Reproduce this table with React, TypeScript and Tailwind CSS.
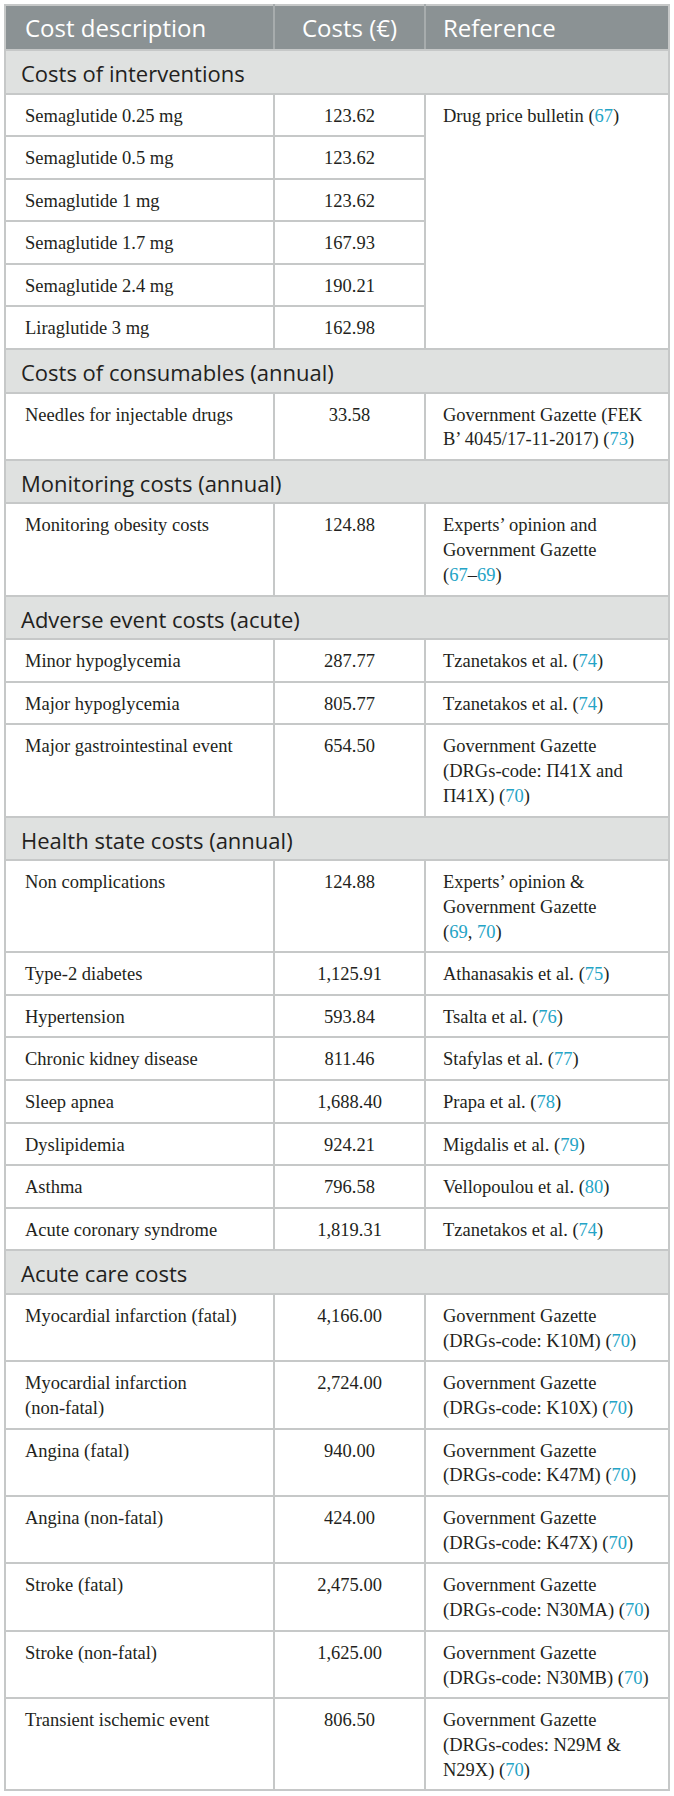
import React from "react";

type Row = { desc: string; cost: string; ref?: string; span?: number; skipRef?: boolean };
type Section = { title: string; rows: Row[] };

const GG = "Government Gazette";

const data: Section[] = [
  {
    title: "Costs of interventions",
    rows: [
      { desc: "Semaglutide 0.25 mg", cost: "123.62", ref: "Drug price bulletin [({67})]", span: 6 },
      { desc: "Semaglutide 0.5 mg", cost: "123.62", skipRef: true },
      { desc: "Semaglutide 1 mg", cost: "123.62", skipRef: true },
      { desc: "Semaglutide 1.7 mg", cost: "167.93", skipRef: true },
      { desc: "Semaglutide 2.4 mg", cost: "190.21", skipRef: true },
      { desc: "Liraglutide 3 mg", cost: "162.98", skipRef: true },
    ],
  },
  {
    title: "Costs of consumables (annual)",
    rows: [
      { desc: "Needles for injectable drugs", cost: "33.58", ref: GG + " (FEK B\u2019 4045/17-11-2017) [({73})]" },
    ],
  },
  {
    title: "Monitoring costs (annual)",
    rows: [
      { desc: "Monitoring obesity costs", cost: "124.88", ref: "Experts\u2019 opinion and " + GG + " [({67}\u2013{69})]" },
    ],
  },
  {
    title: "Adverse event costs (acute)",
    rows: [
      { desc: "Minor hypoglycemia", cost: "287.77", ref: "Tzanetakos et al. [({74})]" },
      { desc: "Major hypoglycemia", cost: "805.77", ref: "Tzanetakos et al. [({74})]" },
      { desc: "Major gastrointestinal event", cost: "654.50", ref: GG + " (DRGs-code: \u03A041X and \u03A041X) [({70})]" },
    ],
  },
  {
    title: "Health state costs (annual)",
    rows: [
      { desc: "Non complications", cost: "124.88", ref: "Experts\u2019 opinion & " + GG + " [({69}, {70})]" },
      { desc: "Type-2 diabetes", cost: "1,125.91", ref: "Athanasakis et al. [({75})]" },
      { desc: "Hypertension", cost: "593.84", ref: "Tsalta et al. [({76})]" },
      { desc: "Chronic kidney disease", cost: "811.46", ref: "Stafylas et al. [({77})]" },
      { desc: "Sleep apnea", cost: "1,688.40", ref: "Prapa et al. [({78})]" },
      { desc: "Dyslipidemia", cost: "924.21", ref: "Migdalis et al. [({79})]" },
      { desc: "Asthma", cost: "796.58", ref: "Vellopoulou et al. [({80})]" },
      { desc: "Acute coronary syndrome", cost: "1,819.31", ref: "Tzanetakos et al. [({74})]" },
    ],
  },
  {
    title: "Acute care costs",
    rows: [
      { desc: "Myocardial infarction [(fatal)]", cost: "4,166.00", ref: GG + " (DRGs-code: K10M) [({70})]" },
      { desc: "Myocardial infarction [(non-fatal)]", cost: "2,724.00", ref: GG + " (DRGs-code: K10X) [({70})]" },
      { desc: "Angina [(fatal)]", cost: "940.00", ref: GG + " (DRGs-code: K47M) [({70})]" },
      { desc: "Angina [(non-fatal)]", cost: "424.00", ref: GG + " (DRGs-code: K47X) [({70})]" },
      { desc: "Stroke [(fatal)]", cost: "2,475.00", ref: GG + " (DRGs-code: N30MA) [({70})]" },
      { desc: "Stroke [(non-fatal)]", cost: "1,625.00", ref: GG + " (DRGs-code: N30MB) [({70})]" },
      { desc: "Transient ischemic event", cost: "806.50", ref: GG + " (DRGs-codes: N29M & N29X) [({70})]" },
    ],
  },
];

function Cites({ text }: { text: string }) {
  const parts = text.split(/\{([^}]+)\}/);
  return (
    <>
      {parts.map((p, i) =>
        i % 2 === 1 ? (
          <span key={i} className="text-[#24a4c6]">
            {p}
          </span>
        ) : (
          <React.Fragment key={i}>{p}</React.Fragment>
        )
      )}
    </>
  );
}

function Rich({ text }: { text: string }) {
  const parts = text.split(/\[([^\]]+)\]/);
  return (
    <>
      {parts.map((p, i) =>
        i % 2 === 1 ? (
          <span key={i} className="whitespace-nowrap">
            <Cites text={p} />
          </span>
        ) : (
          <Cites key={i} text={p} />
        )
      )}
    </>
  );
}

const dataCell =
  "border-2 border-[#c6c8c8] align-top pt-[9px] pb-[6.8px] leading-[24.8px] text-[18.5px] text-[#231f20]";

export default function App() {
  return (
    <div className="bg-white pt-[4px] pl-[4px] min-h-[1796px]">
      <table
        className="table-fixed border-collapse w-[664px] border-2 border-[#c6c8c8]"
        style={{ fontFamily: '"Liberation Serif", serif' }}
      >
        <colgroup>
          <col className="w-[269px]" />
          <col className="w-[151px]" />
          <col className="w-[244px]" />
        </colgroup>
        <thead>
          <tr className="bg-[#8b9294] text-white text-[24px] leading-[33px] font-['Open_Sans',sans-serif]">
            <th className="border-2 border-[#c6c8c8] border-r-[#a7acad] font-normal text-left pl-[19px] pt-[5px] pb-[5px]">
              Cost description
            </th>
            <th className="border-2 border-[#c6c8c8] border-x-[#a7acad] font-normal text-center pt-[5px] pb-[5px]">
              Costs (€)
            </th>
            <th className="border-2 border-[#c6c8c8] border-l-[#a7acad] font-normal text-left pl-[17px] pt-[5px] pb-[5px]">
              Reference
            </th>
          </tr>
        </thead>
        <tbody>
          {data.map((s) => (
            <React.Fragment key={s.title}>
              <tr className="bg-[#dfe1e0]">
                <td
                  colSpan={3}
                  className="border-2 border-[#c6c8c8] pl-[15px] pt-[7px] pb-[4.5px] leading-[30px] text-[22px] text-[#231f20] font-['Open_Sans',sans-serif]"
                >
                  {s.title}
                </td>
              </tr>
              {s.rows.map((r) => (
                <tr key={r.desc} className="bg-white">
                  <td className={dataCell + " pl-[19px] pr-[19px]"}>
                    <Rich text={r.desc} />
                  </td>
                  <td className={dataCell + " text-center"}>{r.cost}</td>
                  {!r.skipRef && (
                    <td rowSpan={r.span ?? 1} className={dataCell + " pl-[17px] pr-[17px]"}>
                      {r.ref && <Rich text={r.ref} />}
                    </td>
                  )}
                </tr>
              ))}
            </React.Fragment>
          ))}
        </tbody>
      </table>
    </div>
  );
}
